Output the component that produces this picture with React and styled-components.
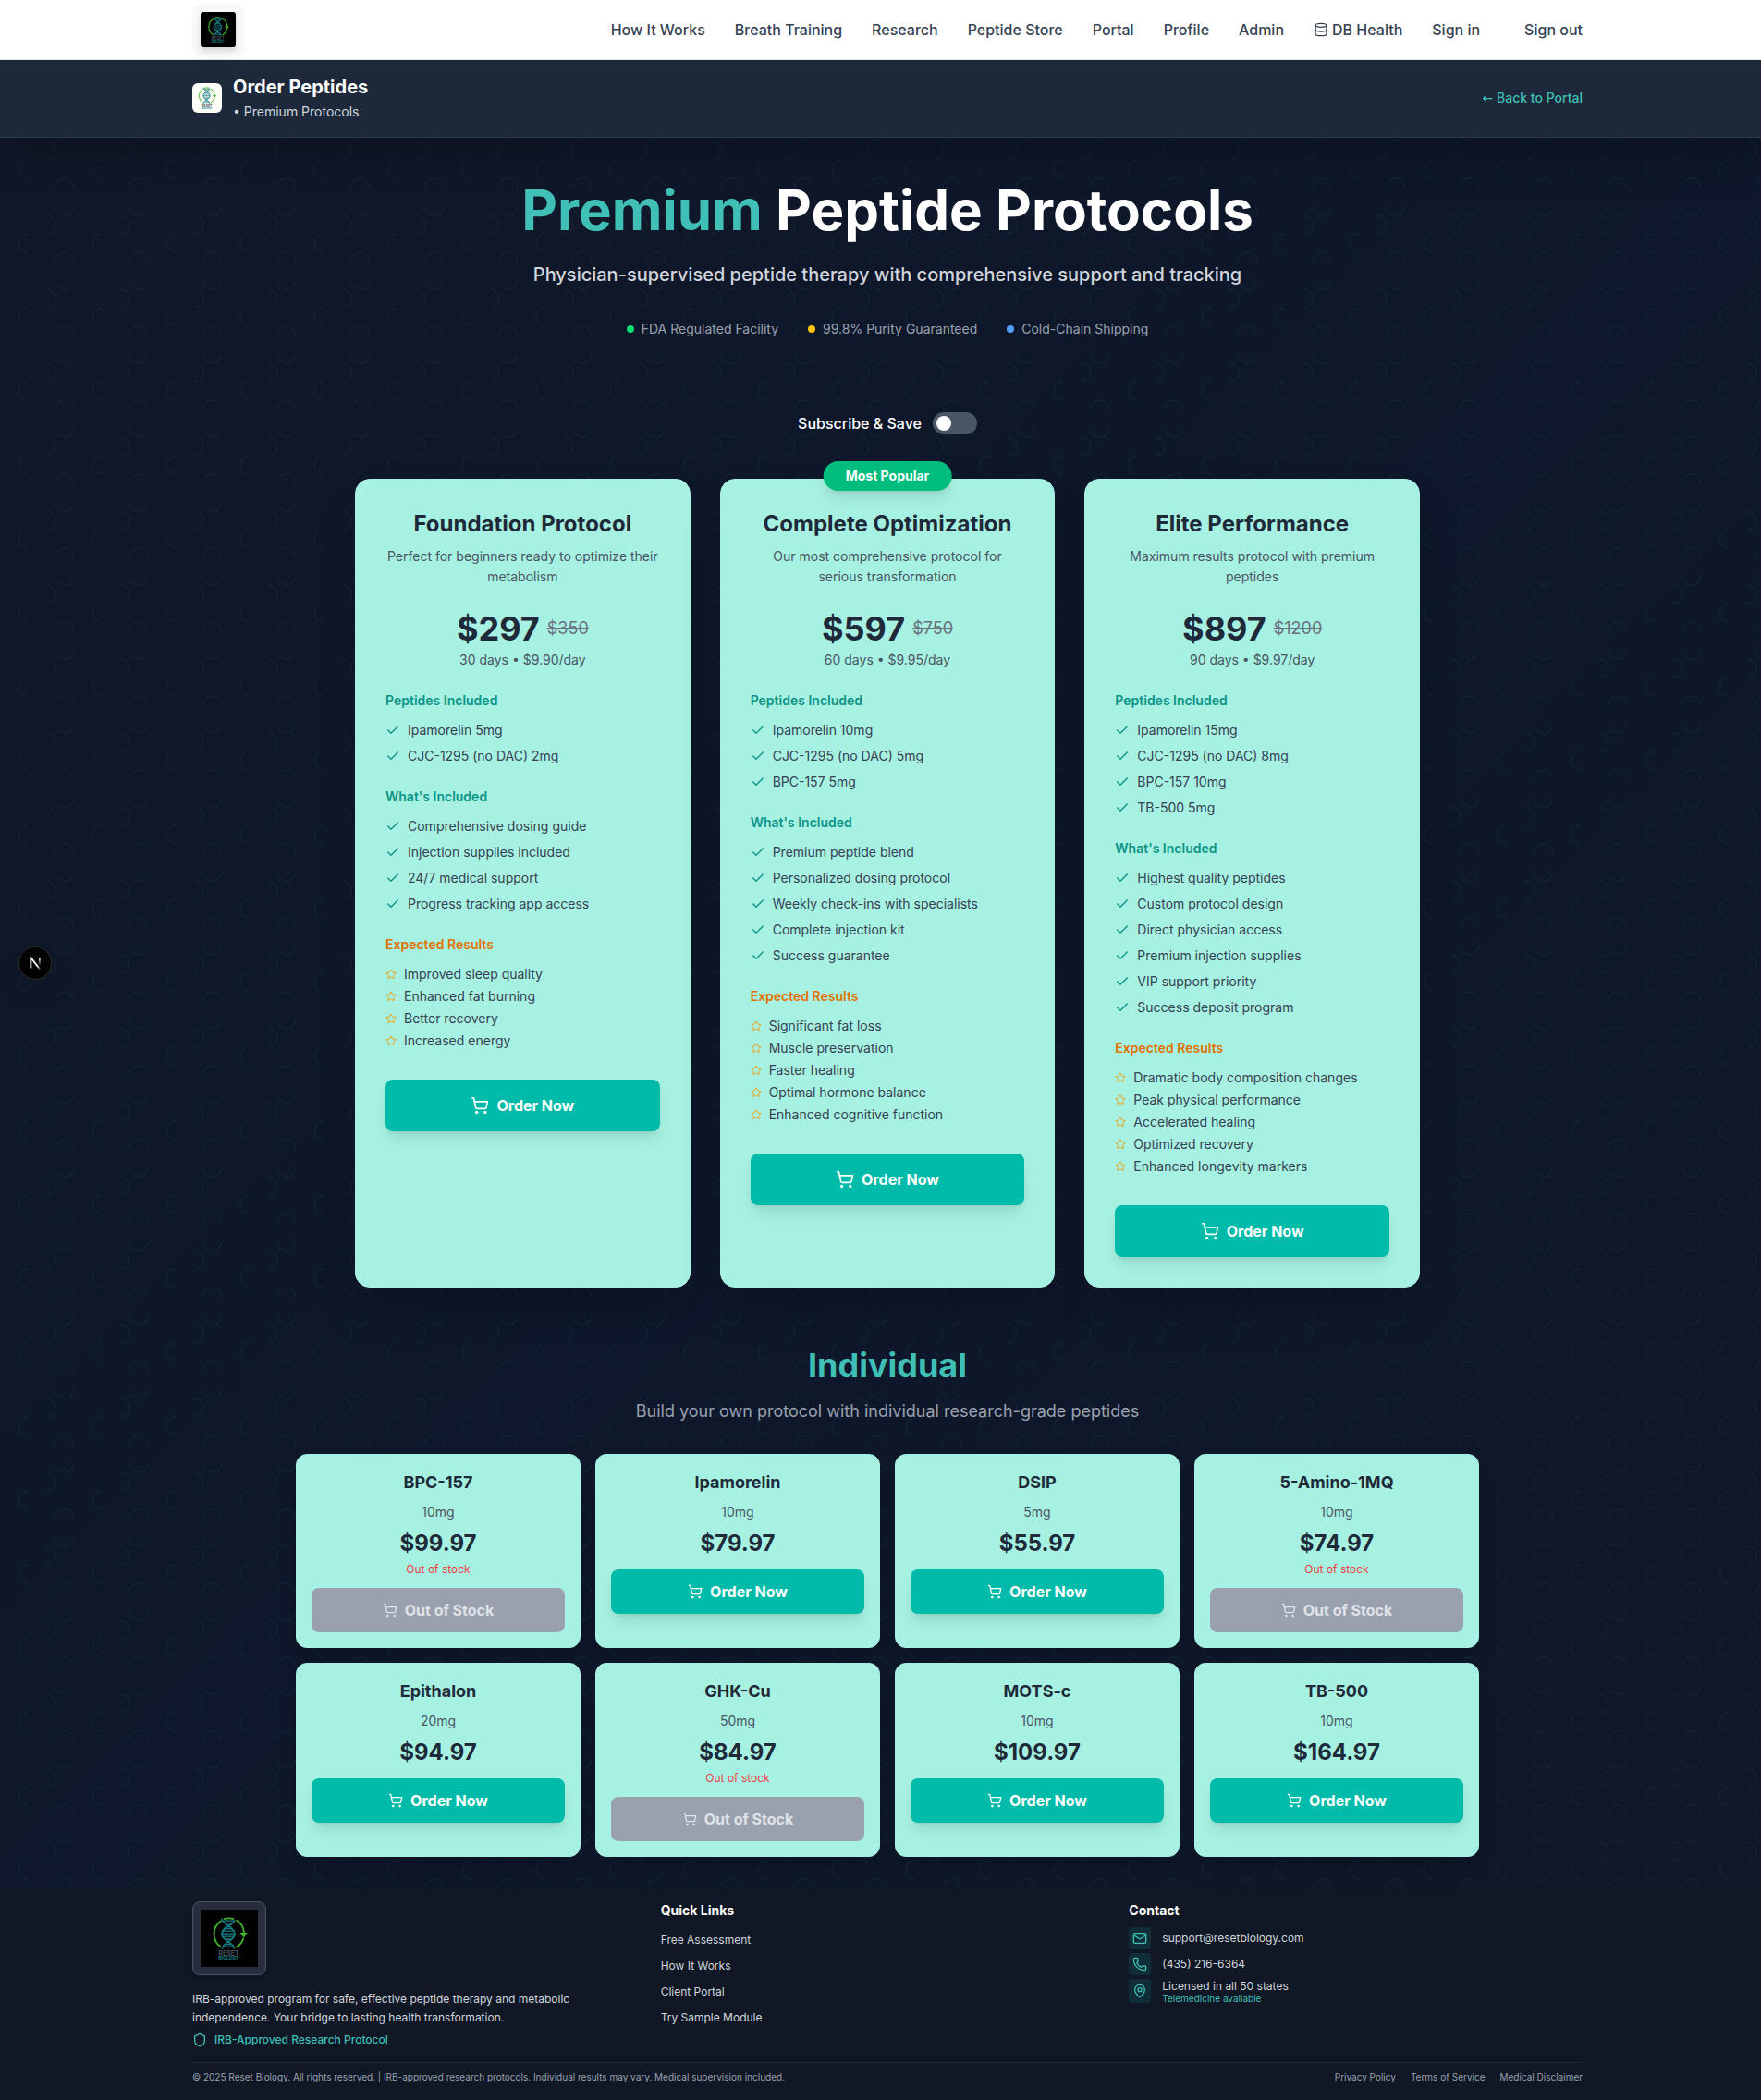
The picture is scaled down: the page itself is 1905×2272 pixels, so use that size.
import React, { useState } from "react";
import styled, { createGlobalStyle, css } from "styled-components";
import { Check, Database, Mail, MapPin, Phone, Shield, ShoppingCart, Star } from "lucide-react";

const brand = "#3fbfb5";
const mint = "#a6f1e1";
const ink = "#1e2939";

const arcTile = encodeURIComponent(
  `<svg xmlns="http://www.w3.org/2000/svg" width="80" height="80"><g fill="none" stroke="#3fbfb5" stroke-opacity="0.08"><path d="M30 13a10 10 0 0 0 0 20"/><path d="M60 43a10 10 0 0 1 20 0"/><path d="M60 63a10 10 0 0 0 20 0"/><path d="M50 -7a10 10 0 0 1 0 20"/><path d="M50 73a10 10 0 0 1 0 20"/></g></svg>`
);

const GlobalStyle = createGlobalStyle`
  *, *::before, *::after { box-sizing: border-box; }
  body {
    margin: 0;
    overflow-x: hidden;
    background: #101725;
    font-family: Inter, "Liberation Sans", sans-serif;
    font-size: 16px;
    line-height: 24px;
    color: #ffffff;
  }
  h1, h2, h3, h4, p, ul { margin: 0; padding: 0; }
  ul { list-style: none; }
  a { color: inherit; text-decoration: none; }
  button, input { font: inherit; }
`;

/* The page runs on beneath the 15px scrollbar, so content centres on the full window. */
const Page = styled.div`
  width: calc(100% + 15px);
  background-color: #0f172a;
  background-image: url("data:image/svg+xml,${arcTile}"), linear-gradient(135deg, #101828, #0e172b 50%, #101828);
  background-size: 80px 80px, auto;
`;

const Container = styled.div`
  max-width: 1552px;
  margin: 0 auto;
  padding: 0 24px;
`;

/* ---------- top navigation ---------- */

const NavBar = styled.header`
  position: relative;
  z-index: 2;
  margin-bottom: -1px;
  background: #ffffff;
  border-bottom: 1px solid #e5e7eb;
`;

const NavRow = styled(Container)`
  display: flex;
  align-items: center;
  justify-content: space-between;
  height: 64px;
`;

const LogoFrame = styled.a`
  display: flex;
  padding: 8px;
  border: 1px solid ${(p) => (p.$dark ? "#4b5361" : "#fafafa")};
  border-radius: ${(p) => (p.$dark ? "8px" : "12px")};
  background: ${(p) => (p.$dark ? "#272f3e" : "#f8f8f8")};
  box-shadow: 0 4px 6px rgba(0, 0, 0, ${(p) => (p.$dark ? 0.1 : 0.03)});
`;

const LogoTile = styled.span`
  display: block;
  flex: none;
  width: ${(p) => p.$size}px;
  height: ${(p) => p.$size}px;
  border-radius: ${(p) => p.$radius}px;
  background: ${(p) => (p.$light ? "#fffef8" : "#000000")};
  overflow: hidden;
  ${(p) => p.$raised && css`box-shadow: 0 4px 6px rgba(0, 0, 0, 0.14);`}

  svg { display: block; width: 100%; height: 100%; }
`;

const NavLinks = styled.nav`
  display: flex;
  align-items: center;
  gap: 32px;
  font-weight: 500;
  color: #364153;
`;

const NavLink = styled.a`
  display: flex;
  align-items: center;
  gap: 4px;
  margin-left: ${(p) => (p.$apart ? "16px" : "0")};
`;

/* ---------- page title bar ---------- */

const TitleBar = styled.div`
  background: #1d293a;
  border-bottom: 1px solid #283a4a;
  box-shadow: 0 25px 50px -12px rgba(0, 0, 0, 0.3);
`;

const TitleRow = styled(Container)`
  display: flex;
  align-items: center;
  justify-content: space-between;
  padding-top: 16px;
  padding-bottom: 16px;
`;

const TitleGroup = styled.div`
  display: flex;
  align-items: center;
  gap: 12px;
`;

const BarTitle = styled.h2`
  font-size: 20px;
  line-height: 28px;
  font-weight: 700;
`;

const BarSubtitle = styled.p`
  color: #d1d5dc;

  span {
    font-size: 14px;
    line-height: 20px;
  }
`;

const BackLink = styled.a`
  font-size: 14px;
  line-height: 20px;
  font-weight: 500;
  color: ${brand};
`;

const Arrow = styled.span`
  font-family: "DejaVu Sans", sans-serif;
`;

/* ---------- hero ---------- */

const Hero = styled.section`
  padding: 48px 24px;
  text-align: center;
`;

const HeroTitle = styled.h1`
  margin-bottom: 24px;
  font-size: 60px;
  line-height: 60px;
  font-weight: 700;
`;

const Accent = styled.span`
  color: ${brand};
`;

const HeroText = styled.p`
  margin-bottom: 32px;
  font-size: 20px;
  line-height: 33px;
  font-weight: 500;
  color: #d1d5dc;
`;

const Assurances = styled.ul`
  display: flex;
  justify-content: center;
  gap: 32px;
  font-size: 14px;
  line-height: 20px;
  color: #99a1af;
`;

const Assurance = styled.li`
  display: flex;
  align-items: center;
  gap: 8px;

  &::before {
    content: "";
    width: 8px;
    height: 8px;
    border-radius: 50%;
    background: ${(p) => p.$dot};
  }
`;

/* ---------- protocols ---------- */

const Protocols = styled.section`
  max-width: 1200px;
  margin: 0 auto;
  padding: 32px 24px 64px;
`;

const SubscribeLabel = styled.label`
  display: flex;
  align-items: center;
  justify-content: center;
  gap: 12px;
  margin-bottom: 48px;
  font-weight: 500;
`;

const Switch = styled.input`
  appearance: none;
  display: flex;
  align-items: center;
  width: 48px;
  height: 24px;
  margin: 0;
  padding: 0 4px;
  border-radius: 12px;
  background: #4a5565;
  cursor: pointer;

  &::before {
    content: "";
    width: 16px;
    height: 16px;
    border-radius: 50%;
    background: #ffffff;
  }

  &:checked {
    justify-content: flex-end;
    background: ${brand};
  }
`;

const PlanGrid = styled.div`
  display: grid;
  grid-template-columns: repeat(3, 1fr);
  gap: 32px;
`;

const PlanCard = styled.article`
  position: relative;
  padding: 32px;
  border: 1px solid ${mint};
  border-radius: 16px;
  background: ${mint};
  box-shadow: 0 25px 50px -12px rgba(0, 0, 0, 0.25);
`;

const Badge = styled.span`
  position: absolute;
  top: -20px;
  left: 50%;
  transform: translateX(-50%);
  padding: 6px 24px;
  border-radius: 16px;
  background: #00bc7d;
  box-shadow: 0 10px 15px -3px rgba(0, 0, 0, 0.1), 0 4px 6px -4px rgba(0, 0, 0, 0.1);
  font-size: 14px;
  line-height: 20px;
  font-weight: 700;
  white-space: nowrap;
`;

const PlanHead = styled.div`
  margin-bottom: 24px;
  text-align: center;
  font-size: 14px;
  line-height: 20px;
  color: #4a5565;
`;

const PlanName = styled.h3`
  margin-bottom: 8px;
  font-size: 24px;
  line-height: 32px;
  font-weight: 700;
  color: ${ink};
`;

const PlanBlurb = styled.p`
  margin-bottom: 25px;
  line-height: 22px;
`;

const PriceRow = styled.div`
  display: flex;
  align-items: center;
  justify-content: center;
  gap: 8px;
  margin-bottom: 4px;
`;

const PlanPrice = styled.span`
  font-size: 36px;
  line-height: 40px;
  font-weight: 700;
  color: ${ink};
`;

const OldPrice = styled.s`
  font-size: 18px;
  line-height: 28px;
  color: #6a7282;
`;

const ListTitle = styled.h4`
  margin-bottom: 12px;
  font-size: 14px;
  line-height: 20px;
  font-weight: 600;
  color: ${(p) => (p.$warm ? "#e17100" : "#0d9488")};
`;

const FeatureList = styled.ul`
  display: flex;
  flex-direction: column;
  gap: ${(p) => (p.$warm ? "4px" : "8px")};
  margin-bottom: ${(p) => (p.$warm ? "32px" : "24px")};
  font-size: 14px;
  line-height: 20px;
  color: #364153;

  svg { color: ${(p) => (p.$warm ? "#f59e0b" : "#0d9488")}; }
`;

const Feature = styled.li`
  display: flex;
  align-items: center;
  gap: 8px;

  svg { flex: none; }
`;

const OrderButton = styled.button`
  display: flex;
  align-items: center;
  justify-content: center;
  gap: 8px;
  width: 100%;
  padding: ${(p) => (p.$large ? "16px" : "12px")} 24px;
  border: 0;
  border-radius: 8px;
  background: #00bba9;
  box-shadow: 0 10px 15px -3px rgba(0, 0, 0, 0.1), 0 4px 6px -4px rgba(0, 0, 0, 0.1);
  font-weight: 700;
  color: #ffffff;
  cursor: pointer;

  &:disabled {
    background: #99a1af;
    box-shadow: none;
    color: #e0e3e8;
    cursor: not-allowed;
  }
`;

/* ---------- individual peptides ---------- */

const Individual = styled.section`
  max-width: 1328px;
  margin: 0 auto;
  padding: 0 24px 32px;
  text-align: center;
`;

const SectionTitle = styled.h2`
  margin-bottom: 16px;
  font-size: 36px;
  line-height: 40px;
  font-weight: 700;
  color: ${brand};
`;

const SectionText = styled.p`
  margin-bottom: 32px;
  font-size: 18px;
  line-height: 28px;
  color: #99a1af;
`;

const ProductGrid = styled.div`
  display: grid;
  grid-template-columns: repeat(4, 1fr);
  gap: 16px;
`;

const ProductCard = styled.article`
  padding: 16px;
  border: 1px solid ${mint};
  border-radius: 12px;
  background: ${mint};
  box-shadow: 0 20px 25px -5px rgba(0, 0, 0, 0.1), 0 8px 10px -6px rgba(0, 0, 0, 0.1);
`;

const ProductName = styled.h3`
  margin-bottom: 8px;
  font-size: 18px;
  line-height: 28px;
  font-weight: 700;
  color: ${ink};
`;

const Dose = styled.p`
  margin-bottom: 8px;
  font-size: 14px;
  line-height: 20px;
  color: #4a5565;
`;

const ProductPrice = styled.p`
  font-size: 24px;
  line-height: 32px;
  font-weight: 700;
  color: ${ink};
`;

const StockNote = styled.p`
  margin-top: 4px;
  font-size: 12px;
  line-height: 16px;
  color: #ef3f46;
`;

const ProductAction = styled.div`
  margin-top: 12px;
`;

/* ---------- footer ---------- */

const FooterBar = styled.footer`
  background: #101725;
  padding-top: 16px;
  font-size: 12px;
  line-height: 16px;
  color: #d1d5dc;
`;

const FooterGrid = styled.div`
  display: grid;
  grid-template-columns: repeat(3, 1fr);
  align-items: start;
  gap: 16px;
  margin-bottom: 16px;
`;

const Brand = styled.div`
  display: flex;
  flex-direction: column;
  align-items: flex-start;
`;

const BrandText = styled.p`
  max-width: 448px;
  margin: 16px 0 6px;
  line-height: 20px;
`;

const IrbNote = styled.p`
  display: flex;
  align-items: center;
  gap: 8px;
  font-weight: 500;
  color: ${brand};
`;

const FooterTitle = styled.h4`
  margin-bottom: 8px;
  font-size: 14px;
  line-height: 20px;
  font-weight: 700;
  color: #ffffff;
`;

const FooterList = styled.ul`
  display: flex;
  flex-direction: column;
  gap: 4px;
`;

const FooterItem = styled.li`
  font-size: 16px;
  line-height: 24px;

  a {
    font-size: 12px;
    line-height: 16px;
  }
`;

const ContactItem = styled.li`
  display: flex;
  gap: 12px;
`;

const ContactIcon = styled.span`
  display: flex;
  align-items: center;
  padding: 4px;
  border-radius: 4px;
  background: #0f2e37;
  color: ${brand};
`;

const ContactText = styled.div`
  align-self: center;
`;

const ContactNote = styled.p`
  font-size: 10px;
  line-height: 10px;
  color: ${brand};
`;

const Legal = styled.div`
  display: flex;
  justify-content: space-between;
  padding: 8px 0 16px;
  border-top: 1px solid #1b2b38;
  font-size: 10px;
  line-height: 15px;
  color: #99a1af;
`;

const LegalLinks = styled.nav`
  display: flex;
  gap: 16px;
`;

const DevButton = styled.button`
  position: fixed;
  top: 1024px;
  left: 20px;
  z-index: 3;
  display: flex;
  align-items: center;
  justify-content: center;
  width: 36px;
  height: 36px;
  padding: 0;
  border: 1px solid #2b2b2b;
  border-radius: 50%;
  background: #030303;
  box-shadow: 0 16px 32px -8px rgba(0, 0, 0, 0.24);
  cursor: pointer;
`;

/* ---------- drawings ---------- */

function ResetLogo({ light }) {
  return (
    <svg viewBox="0 0 62 62" role="img" aria-label="Reset Biology">
      <g fill="none" stroke="#43b02a" strokeWidth="1.9">
        <path d="M22 40.5A17 17 0 0 1 22.5 12" />
        <path d="M25 10.4A17 17 0 0 1 36 10.2" />
        <path d="M38.5 11.4A17 17 0 0 1 47 25" />
        <path d="M46.4 31A17 17 0 0 1 38.5 40.8" />
      </g>
      <path d="M42.6 25h8l-4 5.8z" fill="#43b02a" />
      <g fill="none" stroke="#178088" strokeWidth="1.7">
        <path d="M23 9.5C23.500 17 37 18 37 26.300S24 34.500 23.500 42.500" />
        <path d="M36.800 11.500C36.500 17 23 18 23 26.300S36 34.500 36.600 42.500" />
        <path
          strokeWidth="1.3"
          d="M25.5 12.2h11M27 14.8h8M26 20.5h8M24 23.2h12M23 26.2h14M24 29.2h12M26 32h8M27 37.5h6.500M24.800 40.200h10.500"
        />
      </g>
      <g fontFamily="Inter, sans-serif" fontWeight="700" textAnchor="middle">
        <text x="30.5" y="49.7" fontSize="7" fill={light ? "#4b5560" : "#46505c"}>RESET</text>
        <text x="30.5" y="54" fontSize="5" fill="#178088">BIOLOGY</text>
      </g>
    </svg>
  );
}

function NextMark() {
  return (
    <svg width="14" height="15" viewBox="0 0 14 15" fill="none" aria-hidden="true">
      <defs>
        <linearGradient id="slant" x1="9.5" y1="10" x2="12.6" y2="14.2" gradientUnits="userSpaceOnUse">
          <stop stopColor="#ffffff" />
          <stop offset="1" stopColor="#ffffff" stopOpacity="0" />
        </linearGradient>
        <linearGradient id="stem" x1="11.8" y1="1" x2="11.8" y2="9.5" gradientUnits="userSpaceOnUse">
          <stop stopColor="#ffffff" />
          <stop offset="1" stopColor="#ffffff" stopOpacity="0" />
        </linearGradient>
      </defs>
      <path d="M13.3 15.2 2.340 1v11.600" stroke="url(#slant)" strokeWidth="1.86" />
      <path d="M11.800 1v9" stroke="url(#stem)" strokeWidth="1.86" />
    </svg>
  );
}

/* ---------- content ---------- */

const navItems = ["How It Works", "Breath Training", "Research", "Peptide Store", "Portal", "Profile", "Admin", "DB Health", "Sign in", "Sign out"];

const assurances = [
  ["FDA Regulated Facility", "#05df72"],
  ["99.8% Purity Guaranteed", "#fdc700"],
  ["Cold-Chain Shipping", "#51a2ff"],
];

const plans = [
  {
    name: "Foundation Protocol",
    blurb: "Perfect for beginners ready to optimize their metabolism",
    price: "$297",
    was: "$350",
    term: "30 days • $9.90/day",
    peptides: ["Ipamorelin 5mg", "CJC-1295 (no DAC) 2mg"],
    included: ["Comprehensive dosing guide", "Injection supplies included", "24/7 medical support", "Progress tracking app access"],
    results: ["Improved sleep quality", "Enhanced fat burning", "Better recovery", "Increased energy"],
  },
  {
    name: "Complete Optimization",
    blurb: "Our most comprehensive protocol for serious transformation",
    price: "$597",
    was: "$750",
    term: "60 days • $9.95/day",
    popular: true,
    peptides: ["Ipamorelin 10mg", "CJC-1295 (no DAC) 5mg", "BPC-157 5mg"],
    included: ["Premium peptide blend", "Personalized dosing protocol", "Weekly check-ins with specialists", "Complete injection kit", "Success guarantee"],
    results: ["Significant fat loss", "Muscle preservation", "Faster healing", "Optimal hormone balance", "Enhanced cognitive function"],
  },
  {
    name: "Elite Performance",
    blurb: "Maximum results protocol with premium peptides",
    price: "$897",
    was: "$1200",
    term: "90 days • $9.97/day",
    peptides: ["Ipamorelin 15mg", "CJC-1295 (no DAC) 8mg", "BPC-157 10mg", "TB-500 5mg"],
    included: ["Highest quality peptides", "Custom protocol design", "Direct physician access", "Premium injection supplies", "VIP support priority", "Success deposit program"],
    results: ["Dramatic body composition changes", "Peak physical performance", "Accelerated healing", "Optimized recovery", "Enhanced longevity markers"],
  },
];

const products = [
  { name: "BPC-157", dose: "10mg", price: "$99.97", soldOut: true },
  { name: "Ipamorelin", dose: "10mg", price: "$79.97" },
  { name: "DSIP", dose: "5mg", price: "$55.97" },
  { name: "5-Amino-1MQ", dose: "10mg", price: "$74.97", soldOut: true },
  { name: "Epithalon", dose: "20mg", price: "$94.97" },
  { name: "GHK-Cu", dose: "50mg", price: "$84.97", soldOut: true },
  { name: "MOTS-c", dose: "10mg", price: "$109.97" },
  { name: "TB-500", dose: "10mg", price: "$164.97" },
];

function Features({ title, items, warm }) {
  return (
    <>
      <ListTitle $warm={warm}>{title}</ListTitle>
      <FeatureList $warm={warm}>
        {items.map((item) => (
          <Feature key={item}>
            {warm ? <Star size={12} /> : <Check size={16} />}
            {item}
          </Feature>
        ))}
      </FeatureList>
    </>
  );
}

function Plan({ plan }) {
  return (
    <PlanCard>
      {plan.popular && <Badge>Most Popular</Badge>}
      <PlanHead>
        <PlanName>{plan.name}</PlanName>
        <PlanBlurb>{plan.blurb}</PlanBlurb>
        <PriceRow>
          <PlanPrice>{plan.price}</PlanPrice>
          <OldPrice>{plan.was}</OldPrice>
        </PriceRow>
        <p>{plan.term}</p>
      </PlanHead>
      <Features title="Peptides Included" items={plan.peptides} />
      <Features title="What's Included" items={plan.included} />
      <Features title="Expected Results" items={plan.results} warm />
      <OrderButton $large type="button">
        <ShoppingCart size={20} />
        Order Now
      </OrderButton>
    </PlanCard>
  );
}

function Product({ product }) {
  return (
    <ProductCard>
      <ProductName>{product.name}</ProductName>
      <Dose>{product.dose}</Dose>
      <ProductPrice>{product.price}</ProductPrice>
      {product.soldOut && <StockNote>Out of stock</StockNote>}
      <ProductAction>
        <OrderButton type="button" disabled={product.soldOut}>
          <ShoppingCart size={16} />
          {product.soldOut ? "Out of Stock" : "Order Now"}
        </OrderButton>
      </ProductAction>
    </ProductCard>
  );
}

function Footer() {
  return (
    <FooterBar>
      <Container>
        <FooterGrid>
          <Brand>
            <LogoFrame $dark href="#home">
              <LogoTile $size={62} $radius={0}><ResetLogo /></LogoTile>
            </LogoFrame>
            <BrandText>
              IRB-approved program for safe, effective peptide therapy and metabolic independence. Your bridge to lasting health transformation.
            </BrandText>
            <IrbNote><Shield size={16} />IRB-Approved Research Protocol</IrbNote>
          </Brand>
          <div>
            <FooterTitle>Quick Links</FooterTitle>
            <FooterList>
              {["Free Assessment", "How It Works", "Client Portal", "Try Sample Module"].map((label) => (
                <FooterItem key={label}><a href="#links">{label}</a></FooterItem>
              ))}
            </FooterList>
          </div>
          <div>
            <FooterTitle>Contact</FooterTitle>
            <FooterList>
              <ContactItem>
                <ContactIcon><Mail size={16} /></ContactIcon>
                <ContactText><a href="mailto:support@resetbiology.com">support@resetbiology.com</a></ContactText>
              </ContactItem>
              <ContactItem>
                <ContactIcon><Phone size={16} /></ContactIcon>
                <ContactText><a href="tel:+14352166364">(435) 216-6364</a></ContactText>
              </ContactItem>
              <ContactItem>
                <ContactIcon><MapPin size={16} /></ContactIcon>
                <ContactText>
                  <p>Licensed in all 50 states</p>
                  <ContactNote>Telemedicine available</ContactNote>
                </ContactText>
              </ContactItem>
            </FooterList>
          </div>
        </FooterGrid>
        <Legal>
          <p>© 2025 Reset Biology. All rights reserved. | IRB-approved research protocols. Individual results may vary. Medical supervision included.</p>
          <LegalLinks>
            <a href="#privacy">Privacy Policy</a>
            <a href="#terms">Terms of Service</a>
            <a href="#disclaimer">Medical Disclaimer</a>
          </LegalLinks>
        </Legal>
      </Container>
    </FooterBar>
  );
}

export default function App() {
  const [subscribed, setSubscribed] = useState(false);

  return (
    <>
      <GlobalStyle />
      <Page>
        <NavBar>
          <NavRow>
            <LogoFrame href="#home">
              <LogoTile $size={38} $radius={3} $raised><ResetLogo /></LogoTile>
            </LogoFrame>
            <NavLinks>
              {navItems.map((label) => (
                <NavLink key={label} href="#nav" $apart={label === "Sign out"}>
                  {label === "DB Health" && <Database size={16} />}
                  {label}
                </NavLink>
              ))}
            </NavLinks>
          </NavRow>
        </NavBar>
        <TitleBar>
          <TitleRow>
            <TitleGroup>
              <LogoTile $size={32} $radius={6} $light><ResetLogo light /></LogoTile>
              <div>
                <BarTitle>Order Peptides</BarTitle>
                <BarSubtitle><span>• Premium Protocols</span></BarSubtitle>
              </div>
            </TitleGroup>
            <BackLink href="#portal"><Arrow>←</Arrow> Back to Portal</BackLink>
          </TitleRow>
        </TitleBar>
        <main>
          <Hero>
            <HeroTitle><Accent>Premium</Accent> Peptide Protocols</HeroTitle>
            <HeroText>Physician-supervised peptide therapy with comprehensive support and tracking</HeroText>
            <Assurances>
              {assurances.map(([label, dot]) => (
                <Assurance key={label} $dot={dot}>{label}</Assurance>
              ))}
            </Assurances>
          </Hero>
          <Protocols>
            <SubscribeLabel>
              Subscribe &amp; Save
              <Switch
                type="checkbox"
                role="switch"
                checked={subscribed}
                onChange={(event) => setSubscribed(event.target.checked)}
              />
            </SubscribeLabel>
            <PlanGrid>
              {plans.map((plan) => <Plan key={plan.name} plan={plan} />)}
            </PlanGrid>
          </Protocols>
          <Individual>
            <SectionTitle>Individual</SectionTitle>
            <SectionText>Build your own protocol with individual research-grade peptides</SectionText>
            <ProductGrid>
              {products.map((product) => <Product key={product.name} product={product} />)}
            </ProductGrid>
          </Individual>
        </main>
        <Footer />
      </Page>
      <DevButton type="button" aria-label="Open developer tools"><NextMark /></DevButton>
    </>
  );
}
